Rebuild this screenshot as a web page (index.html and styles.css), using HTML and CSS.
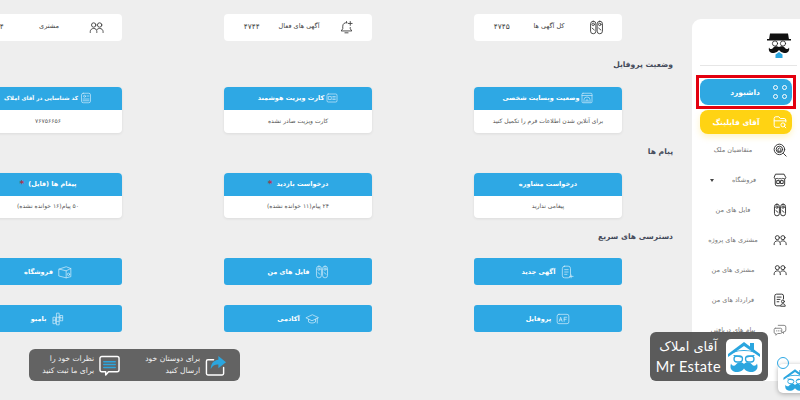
FILE: index.html
```html
<!DOCTYPE html>
<html lang="fa" dir="rtl">
  <head>
    <meta charset="UTF-8" />
    <meta name="viewport" content="width=device-width, initial-scale=1.0" />
    <title>داشبورد - آقای املاک</title>
    <link rel="stylesheet" href="styles.css">
  </head>
  <body>
    <!-- icon set -->
    <svg class="icon-defs" xmlns="http://www.w3.org/2000/svg">
      <symbol id="i-files" viewBox="0 0 24 24"><rect x="2.5" y="2" width="8.5" height="20" rx="4.2"/><rect x="13" y="2" width="8.5" height="20" rx="4.2"/><circle cx="6.7" cy="7" r="2"/><circle cx="17.2" cy="7" r="2"/><path d="M5 13l3.5 3M15.5 13l3.5 3"/></symbol>
      <symbol id="i-bell" viewBox="0 0 24 24"><path d="M13 4.5C8.5 3.5 6 6.500 6 10v4l-2.500 3.500h17L18 14v-2"/><path d="M9.500 20.500h5M12 2.500v1.500"/><path d="M18 2.500v6M15 5.500h6"/></symbol>
      <symbol id="i-people" viewBox="0 0 24 24"><circle cx="7.500" cy="8" r="3.500"/><circle cx="17" cy="8" r="3.500"/><path d="M2 20v-1.500c0-3 2.500-5 5.500-5s5 2 5 5V20M12.500 15.500c1-1.300 2.800-2 4.500-2 3 0 5.500 2 5.500 5V20"/></symbol>
      <symbol id="i-web" viewBox="0 0 24 24"><rect x="2" y="2.500" width="20" height="19" rx="2"/><path d="M2 7h20M6 20v-5a6 5 0 0 1 12 0v5M10 20v-4h4v4"/></symbol>
      <symbol id="i-card" viewBox="0 0 24 24"><rect x="2" y="4" width="20" height="16" rx="2.500"/><path d="M13.500 9h5M13.500 12h5M13.500 15h5M5.500 9h5v6h-5z"/></symbol>
      <symbol id="i-idcard" viewBox="0 0 24 24"><rect x="3" y="2.500" width="18" height="19" rx="3.500"/><circle cx="9" cy="8.500" r="2"/><path d="M14 8h4M6 14h12M6 17.500h12"/></symbol>
      <symbol id="i-newdoc" viewBox="0 0 24 24"><rect x="4" y="2" width="14" height="20" rx="4"/><path d="M8 8h6M8 12h6M8 16h4M19 17v5M16.500 19.500h6"/></symbol>
      <symbol id="i-profile" viewBox="0 0 24 24"><rect x="2" y="4" width="20" height="16" rx="3"/><path d="M5.500 16l2.500-7 2.500 7M6.500 13.500h3M14 16V9h4.500M14 12.500h3.500"/></symbol>
      <symbol id="i-cap" viewBox="0 0 24 24"><path d="M12 5L1.500 10 12 15l10.500-5zM6 12.500V17c3 2.500 9 2.500 12 0v-4.500M21 11v8"/></symbol>
      <symbol id="i-box" viewBox="0 0 24 24"><path d="M2 7l12-4 8 3v14l-8 2-12-3zM2 7l12 3 8-4M14 10v12"/><circle cx="18" cy="16" r="2"/></symbol>
      <symbol id="i-bamboo" viewBox="0 0 24 24"><path d="M10 2h4v20h-4zM10 9h4M10 16h4M4 9h4v11H4zM4 14h4M16 6h4v9h-4zM16 10h4M8 12h2M14 9h2"/></symbol>
      <symbol id="i-folder" viewBox="0 0 24 24"><path d="M11 21H5a3 3 0 0 1-3-3V6a3 3 0 0 1 3-3h5l2.500 3H19a3 3 0 0 1 3 3v3"/><path d="M2 10h20"/><circle cx="17" cy="17" r="3.500"/><path d="M19.500 19.500L22 22"/></symbol>
      <symbol id="i-search" viewBox="0 0 24 24"><circle cx="11" cy="11" r="9"/><circle cx="11" cy="11" r="5.500"/><path d="M8.500 13.500v-3l2.500-2 2.500 2v3zM18 18l4.500 4.500"/></symbol>
      <symbol id="i-store" viewBox="0 0 24 24"><path d="M5 2h14l3 6c0 2.500-3.500 2.500-5 .8-1.200 1.700-3.800 1.700-5 0-1.200 1.700-3.800 1.700-5 0C5.500 10.500 2 10.500 2 8zM4 11v8a3 3 0 0 0 3 3h10a3 3 0 0 0 3-3v-8"/><rect x="7" y="13" width="4" height="5"/><rect x="13.500" y="13" width="4" height="5"/></symbol>
      <symbol id="i-contract" viewBox="0 0 24 24"><path d="M12 22H6a3 3 0 0 1-3-3V5a3 3 0 0 1 3-3h9a3 3 0 0 1 3 3v5"/><path d="M7 7h7M7 11h5M7 15h3"/><circle cx="17" cy="14.500" r="2.500"/><path d="M13 22c0-5 8-5 8 0z"/></symbol>
      <symbol id="i-chat" viewBox="0 0 24 24"><path d="M9 4h10a3 3 0 0 1 3 3v5a3 3 0 0 1-3 3h-1v3l-3-3"/><path d="M4 9h9a2 2 0 0 1 2 2v5a2 2 0 0 1-2 2H8l-3 3v-3H4a2 2 0 0 1-2-2v-5a2 2 0 0 1 2-2zM6 13.500h.5M9 13.500h.5M12 13.500h.5"/></symbol>
      <symbol id="i-logo" viewBox="0 0 36 36">
        <path d="M2 15L18 3l6 4.500V4h4v6.500L34 15v3L18 7 2 18z" fill="#2ba6df"/>
        <path d="M8 13c5-2 15-2 20 0M8 16.500l7 1.500M28 16.500L21 18" fill="none" stroke="#2ba6df" stroke-width="1.200"/>
        <rect x="8" y="17" width="8.500" height="6" rx="3" fill="none" stroke="#2ba6df" stroke-width="1.300"/>
        <rect x="19.500" y="17" width="8.500" height="6" rx="3" fill="none" stroke="#2ba6df" stroke-width="1.300"/>
        <path d="M18 25c-2-2.500-6-2-8 .5-1.500 2-4 1.500-5-1 -2 6 2 9 7 8.500 3-.3 5-2 6-3.500 1 1.500 3 3.200 6 3.500 5 .5 9-2.500 7-8.500-1 2.500-3.500 3-5 1-2-2.500-6-3-8-.5z" fill="#2ba6df"/>
      </symbol>
    </svg>

    <div class="page">
      <aside class="sidebar">
        <div class="brand">
          <svg class="brand-logo" viewBox="0 0 26 26">
            <path d="M4 1.500h18l1 6H3z" fill="#111"/>
            <rect x="1" y="7" width="24" height="1.500" fill="#111"/>
            <circle cx="9" cy="11.500" r="2.600" fill="#fff" stroke="#222"/>
            <circle cx="17" cy="11.500" r="2.600" fill="#fff" stroke="#222"/>
            <path d="M13 15c-2-1.500-5-1-6 1-1 1.500-3 1.500-4-.5-1 4 2 6 5 5.500 2-.3 4-1.500 5-3 1 1.500 3 2.700 5 3 3 .5 6-1.500 5-5.500-1 2-3 2-4 .5-1-2-4-2.500-6-1z" fill="#111"/>
            <path d="M9.500 22.500l3.500-2.500 3.500 2.500V26h-7z" fill="#2ba6df"/>
          </svg>
        </div>
        <nav class="nav">
          <div class="nav-marked">
            <a class="nav-item nav-active">
              <span class="nav-icon dots"><i></i><i></i><i></i><i></i></span>
              <span class="nav-label nav-strong">داشبورد</span>
            </a>
          </div>
          <a class="nav-item nav-filing">
            <svg class="nav-icon"><use href="#i-folder"/></svg>
            <span class="nav-label nav-strong">آقای فایلینگ</span>
          </a>
          <a class="nav-item">
            <svg class="nav-icon"><use href="#i-search"/></svg>
            <span class="nav-label">متقاضیان ملک</span>
          </a>
          <a class="nav-item">
            <svg class="nav-icon"><use href="#i-store"/></svg>
            <span class="nav-label nav-split">فروشگاه<b class="caret"></b></span>
          </a>
          <a class="nav-item">
            <svg class="nav-icon"><use href="#i-files"/></svg>
            <span class="nav-label">فایل های من</span>
          </a>
          <a class="nav-item">
            <svg class="nav-icon"><use href="#i-people"/></svg>
            <span class="nav-label">مشتری های پروژه</span>
          </a>
          <a class="nav-item">
            <svg class="nav-icon"><use href="#i-people"/></svg>
            <span class="nav-label">مشتری های من</span>
          </a>
          <a class="nav-item">
            <svg class="nav-icon"><use href="#i-contract"/></svg>
            <span class="nav-label">قرارداد های من</span>
          </a>
          <a class="nav-item">
            <svg class="nav-icon nav-muted"><use href="#i-chat"/></svg>
            <span class="nav-label">پیام های دریافتی</span>
          </a>
        </nav>
      </aside>

      <main class="content">
        <section class="columns stats">
          <div class="stat">
            <svg class="stat-icon"><use href="#i-files"/></svg>
            <span class="stat-text">کل آگهی ها</span>
            <span class="stat-text stat-value">۴۷۴۵</span>
          </div>
          <div class="stat">
            <svg class="stat-icon"><use href="#i-bell"/></svg>
            <span class="stat-text">آگهی های فعال</span>
            <span class="stat-text stat-value">۴۷۴۴</span>
          </div>
          <div class="stat">
            <svg class="stat-icon"><use href="#i-people"/></svg>
            <span class="stat-text">مشتری</span>
            <span class="stat-text stat-value">۴</span>
          </div>
        </section>

        <h2 class="title-profile">وضعیت پروفایل</h2>
        <section class="columns">
          <div class="card">
            <div class="card-head"><svg class="head-icon"><use href="#i-web"/></svg>وضعیت وبسایت شخصی</div>
            <div class="card-body">برای آنلاین شدن اطلاعات فرم را تکمیل کنید</div>
          </div>
          <div class="card">
            <div class="card-head"><svg class="head-icon"><use href="#i-card"/></svg>کارت ویزیت هوشمند</div>
            <div class="card-body">کارت ویزیت صادر نشده</div>
          </div>
          <div class="card">
            <div class="card-head head-small"><svg class="head-icon"><use href="#i-idcard"/></svg>کد شناسایی در آقای املاک</div>
            <div class="card-body">۷۶۷۵۶۶۵۶</div>
          </div>
        </section>

        <h2 class="title-messages">پیام ها</h2>
        <section class="columns">
          <div class="card">
            <div class="card-head">درخواست مشاوره</div>
            <div class="card-body">پیغامی ندارید</div>
          </div>
          <div class="card">
            <div class="card-head">درخواست بازدید<span class="star">*</span></div>
            <div class="card-body">۲۴ پیام(۱۱ خوانده نشده)</div>
          </div>
          <div class="card">
            <div class="card-head">پیغام ها (فایل)<span class="star">*</span></div>
            <div class="card-body">۵۰ پیام(۱۶ خوانده نشده)</div>
          </div>
        </section>

        <h2 class="title-quick">دسترسی های سریع</h2>
        <section class="columns quick">
          <a class="quick-btn"><svg class="quick-icon"><use href="#i-newdoc"/></svg>آگهی جدید</a>
          <a class="quick-btn"><svg class="quick-icon"><use href="#i-files"/></svg>فایل های من</a>
          <a class="quick-btn"><svg class="quick-icon"><use href="#i-box"/></svg>فروشگاه</a>
          <a class="quick-btn"><svg class="quick-icon"><use href="#i-profile"/></svg>پروفایل</a>
          <a class="quick-btn"><svg class="quick-icon"><use href="#i-cap"/></svg>آکادمی</a>
          <a class="quick-btn"><svg class="quick-icon"><use href="#i-bamboo"/></svg>بامبو</a>
        </section>
      </main>
    </div>

    <!-- floating stuff over the page -->
    <div class="share-bar">
      <div class="share-item">
        <svg class="share-icon" viewBox="0 0 22 22">
          <path d="M9 5H3a1.500 1.500 0 0 0-1.500 1.500v13A1.500 1.500 0 0 0 3 21h15a1.500 1.500 0 0 0 1.500-1.500V13" fill="none" stroke="#fff" stroke-width="1.500"/>
          <path d="M14 1l8 6.500-8 6.500v-4c-4 0-6 1-8 5 0-6 3-9.500 8-10z" fill="#2ba6df"/>
        </svg>
        <p>برای دوستان خود<br>ارسال کنید</p>
      </div>
      <div class="share-item">
        <svg class="share-icon" viewBox="0 0 22 22">
          <path d="M3 1.500h16a2 2 0 0 1 2 2v12a2 2 0 0 1-2 2h-9l-3 3.500v-3.500H3a2 2 0 0 1-2-2v-12a2 2 0 0 1 2-2z" fill="none" stroke="#fff" stroke-width="1.500"/>
          <path d="M5 7h12M5 10h12M5 13h12" stroke="#2ba6df" stroke-width="1.500"/>
        </svg>
        <p>نظرات خود را<br>برای ما ثبت کنید</p>
      </div>
    </div>

    <div class="float-btn">
      <span class="float-ring"></span>
      <svg class="float-logo"><use href="#i-logo"/></svg>
    </div>

    <div class="stamp">
      <span class="stamp-tile"><svg class="stamp-logo"><use href="#i-logo"/></svg></span>
      <div class="stamp-text">
        <span class="stamp-fa">آقای املاک</span>
        <span class="stamp-en">Mr Estate</span>
      </div>
    </div>
  </body>
</html>
```

FILE: styles.css
```css
* {
  margin: 0;
  padding: 0;
  box-sizing: border-box;
  font-family: "DejaVu Sans", "Noto Sans", sans-serif;
}

html,
body {
  width: 800px;
  height: 400px;
  overflow: hidden;
}

body {
  position: relative;
  background: #eeeeee;
  color: #444;
}

.icon-defs {
  display: none;
}

svg {
  fill: none;
  stroke: currentColor;
  stroke-width: 1.5;
  stroke-linecap: round;
  stroke-linejoin: round;
}

.page {
  display: flex;
  height: 400px;
}

/* sidebar */
.sidebar {
  flex: 0 0 108px;
  height: 362px;
  margin-top: 19px;
  background: white;
  border-radius: 9px 0 0 0;
}

.brand {
  height: 47px;
  margin: 0 3px 9px 8px;
  padding: 13px 5px 0 0;
  border-bottom: 1px solid #e6e6e6;
}

.brand-logo {
  display: block;
  width: 26px;
  height: 26px;
  stroke: none;
  stroke-width: 0.8;
}

.nav {
  display: flex;
  flex-direction: column;
}

.nav-marked {
  width: 100px;
  height: 34px;
  margin-right: 4px;
  padding: 1px;
  border: 3px solid #e3000f;
}

.nav-item {
  display: flex;
  align-items: center;
  height: 30px;
  padding: 0 10px 0 4px;
  color: #777;
  font-size: 6.5px;
}

.nav-icon {
  flex: 0 0 14px;
  width: 14px;
  height: 14px;
  margin: 0 3px;
  color: #3a3a3a;
  stroke-width: 1.7;
}

.nav-muted {
  color: #888;
}

.nav-label {
  flex: 1;
  text-align: center;
}

.nav-strong {
  font-size: 7.5px;
  font-weight: bold;
  color: white;
}

.nav-split {
  display: flex;
  align-items: center;
  justify-content: center;
  gap: 18px;
}

.caret {
  width: 0;
  height: 0;
  border-top: 3px solid #444;
  border-left: 2.5px solid transparent;
  border-right: 2.5px solid transparent;
}

.nav-active,
.nav-filing {
  width: 92px;
  padding: 0 2px;
  border-radius: 8px;
}

.nav-active {
  height: 26px;
  padding-left: 20px;
  background: #2fa8e2;
}

.nav-filing {
  height: 24px;
  margin: 1px 8px 1px 0;
  background: #ffd313;
  box-shadow: 0 3px 6px rgba(255, 211, 19, 0.25);
}

.nav-filing .nav-icon {
  color: white;
}

.dots {
  display: grid;
  grid-template-columns: 5px 5px;
  gap: 4px;
  justify-content: center;
  align-content: center;
}

.dots i {
  width: 5px;
  height: 5px;
  border: 1px solid white;
  border-radius: 50%;
}

/* main part */
.content {
  flex: 1;
  padding: 14px 19px 0 0;
}

.columns {
  display: grid;
  grid-template-columns: repeat(3, 148px);
  column-gap: 102px;
  margin-right: 51px;
}

.stats {
  height: 27px;
}

.stat {
  display: grid;
  grid-template-columns: repeat(3, 1fr);
  align-items: center;
  justify-items: center;
  height: 27px;
  padding: 0 2px 0 4px;
  background: white;
  border-radius: 4px;
  font-size: 6.5px;
  color: #444;
}

.stat-icon {
  width: 15px;
  height: 15px;
  color: #444;
  stroke-width: 1.5;
}

.stat-text {
  margin-bottom: 3px;
}

.stat-value {
  font-size: 7.5px;
}

h2 {
  height: 14px;
  line-height: 14px;
  font-size: 7.6px;
  font-weight: bold;
  color: #444a5a;
  margin-bottom: 15px;
}

.title-profile {
  margin-top: 17px;
}

.title-messages {
  margin-top: 12px;
  margin-bottom: 14px;
}

.title-quick {
  margin-top: 12px;
  margin-bottom: 14px;
}

.card {
  height: 45.5px;
  background: white;
  border-radius: 4px;
  box-shadow: 0 1px 3px rgba(0, 0, 0, 0.08);
  overflow: hidden;
}

.card-head {
  display: flex;
  align-items: center;
  justify-content: center;
  gap: 2px;
  height: 23px;
  padding-bottom: 1px;
  background: #2ea8e4;
  color: white;
  font-size: 6.5px;
  font-weight: bold;
}

.head-small {
  font-size: 5.6px;
}

.head-icon {
  width: 12px;
  height: 12px;
  color: #cdeafa;
  stroke-width: 1.4;
}

.star {
  color: #a8364f;
  font-size: 9px;
  margin-right: 2px;
}

.card-body {
  display: flex;
  align-items: center;
  justify-content: center;
  height: 22.5px;
  padding-bottom: 2px;
  font-size: 6px;
  color: #555;
}

.quick {
  row-gap: 20px;
}

.quick-btn {
  display: flex;
  align-items: center;
  justify-content: center;
  gap: 5px;
  height: 27px;
  background: #2ea8e4;
  border-radius: 3px;
  color: white;
  font-size: 6.5px;
  font-weight: bold;
}

.quick-icon {
  width: 14px;
  height: 14px;
  color: #d8effb;
  stroke-width: 1.2;
}

/* overlays */
.share-bar {
  position: absolute;
  left: 29px;
  top: 349px;
  display: flex;
  align-items: center;
  gap: 25px;
  width: 211px;
  height: 32px;
  padding-right: 14px;
  background: #636363;
  border-radius: 6px;
  color: #f2f2f2;
  font-size: 7.6px;
  line-height: 12px;
}

.share-item {
  display: flex;
  align-items: center;
  gap: 5px;
}

.share-icon {
  flex: 0 0 21px;
  width: 21px;
  height: 21px;
  stroke: none;
}

.stamp {
  position: absolute;
  left: 650px;
  top: 332px;
  display: flex;
  align-items: center;
  gap: 5px;
  width: 118px;
  height: 49px;
  padding-right: 6px;
  background: rgba(78, 78, 78, 0.92);
  border-radius: 6px;
  color: white;
}

.stamp-tile {
  flex: 0 0 36px;
  height: 36px;
  background: white;
  border-radius: 5px;
}

.stamp-logo {
  display: block;
  width: 36px;
  height: 36px;
  stroke: none;
}

.stamp-text {
  display: flex;
  flex-direction: column;
  align-items: center;
  line-height: 20px;
}

.stamp-fa {
  font-size: 13px;
}

.stamp-en {
  font-family: "Lato", sans-serif;
  font-size: 14.5px;
  letter-spacing: 0.4px;
  direction: ltr;
}

.float-btn {
  position: absolute;
  left: 778px;
  top: 364px;
  width: 30px;
  height: 29px;
  background: white;
  border-radius: 5px;
  box-shadow: 0 1px 5px rgba(0, 0, 0, 0.3);
}

.float-ring {
  position: absolute;
  left: -1px;
  top: -7px;
  width: 12px;
  height: 12px;
  border: 1px solid #2ea8e4;
  border-radius: 50%;
}

.float-logo {
  display: block;
  width: 26px;
  height: 26px;
  margin: 3px 0 0 1px;
  stroke: none;
}
```
